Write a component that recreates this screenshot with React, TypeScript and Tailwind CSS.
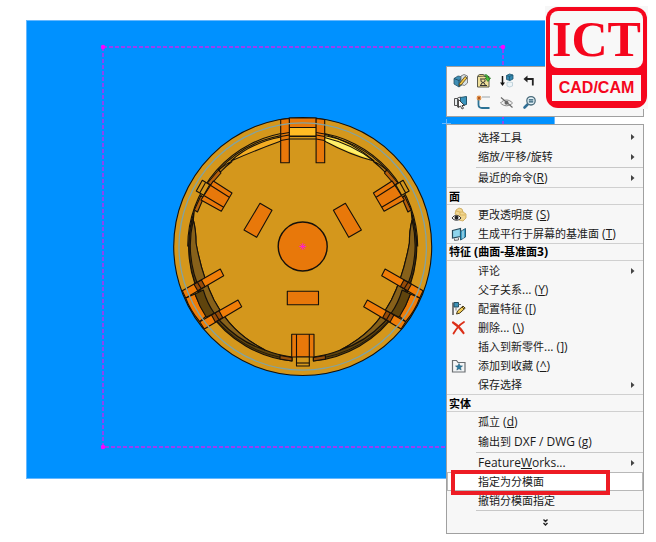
import React from 'react';
import clsx from 'clsx';

const Svg = ({ children }: { children: React.ReactNode }) => (
  <svg viewBox="0 0 16 16" className="size-4 shrink-0" fill="none" aria-hidden="true">
    {children}
  </svg>
);

const EditPartIcon = () => (
  <Svg>
    <path d="M1 5.500l4-2.500 5 1v7l-4 3-5-3z" fill="#3f8fb5" stroke="#2a5468" strokeWidth=".8" />
    <path d="M1 5.500l5 2v6.500M6 7.500l4-3.500" stroke="#1d4256" strokeWidth=".8" />
    <path d="M8 3l3-1.500 3.500 1.500v7l-3 2.500-3.500-1z" fill="#d9e3e8" stroke="#666" strokeWidth=".8" />
    <path d="M6.500 10.500l5.500-7 2 1.500-5.500 6.500-2.500 1z" fill="#f3c94b" stroke="#4d3a10" strokeWidth=".8" />
  </Svg>
);

const EditSketchIcon = () => (
  <Svg>
    <path d="M1.500 3.500h11.500v10.500h-11.500z" fill="#efdf9a" stroke="#5b594a" />
    <path d="M1.500 3l2-1.500h4l1 2" fill="#d8c779" stroke="#5b594a" />
    <path d="M4 6h5M4 12.500h7M5 6.500v2l2 1-2 1.500v1.500M9 6.500v2l-2 1 2 1.500v1.500" stroke="#333" />
    <path d="M8.500 2c2-1 3.500 0 4 3h2L12 8.500 9 5h1.500C10.500 4 10 3 8.500 2z" fill="#48bf3c" stroke="#1d6c1a" strokeWidth=".7" />
  </Svg>
);

const SuppressIcon = () => (
  <Svg>
    <path d="M3.500 3v8" stroke="#111" strokeWidth="1.500" />
    <path d="M1 9.500h5L3.500 13z" fill="#111" />
    <path d="M7.500 2.500l3-1.500 3.500 1v4L11 7.500 7.500 6.500z" fill="#3489b0" stroke="#1d5570" strokeWidth=".8" />
    <path d="M7.500 2.500l3 1L14 2M10.500 3.500v4" stroke="#1d5570" strokeWidth=".7" />
    <path d="M8 9.500l2.500-.500 3 .500v3.500l-3 1-2.500-1z" fill="#eef5f8" stroke="#b5cbd5" strokeWidth=".8" />
  </Svg>
);

const RollbackIcon = () => (
  <Svg>
    <path d="M4 6h6.800v6.500" stroke="#222" strokeWidth="1.800" />
    <path d="M5.500 2.500v7L1.500 6z" fill="#222" />
  </Svg>
);

const SelectOtherIcon = () => (
  <Svg>
    <path d="M1.500 3.500h5v7h-5z" fill="#e9edef" stroke="#555" />
    <path d="M4.500 3l3-1v9l-3 1z" fill="#e9edef" stroke="#555" />
    <path d="M7.500 2.500l6-1v8l-6 1z" fill="#3b94bd" stroke="#24586f" />
    <path d="M5.500 4.500v8l2-1.500 1.500 3 1.500-.700L9 10.500h2.500z" fill="#fff" stroke="#222" strokeWidth=".8" />
  </Svg>
);

const SketchIcon = () => (
  <Svg>
    <path d="M2.500 4v5.500c0 2.500 1.500 3.500 3.500 3.500h7.500" stroke="#2c7396" strokeWidth="1.800" />
    <path d="M6 2h8" stroke="#9aa4a9" />
    <path d="M3 .500v5M.5 3h5M1.200 1.200l3.600 3.600M4.800 1.200l-3.600 3.600" stroke="#e0893a" strokeWidth="1.200" />
    <circle cx="3" cy="3" r="1.300" fill="#b5571a" />
  </Svg>
);

const HideIcon = () => (
  <Svg>
    <path d="M1.500 8c3.300-4 8.700-4 12 0-3.300 3.700-8.700 3.700-12 0z" fill="#eee" stroke="#888" />
    <circle cx="7.500" cy="7.800" r="2" fill="#666" />
    <path d="M2 2.500l11.500 10" stroke="#666" strokeWidth="1.100" />
  </Svg>
);

const ZoomSelectionIcon = () => (
  <Svg>
    <path d="M6 9l-3.500 3.500" stroke="#316f96" strokeWidth="2.600" strokeLinecap="round" />
    <circle cx="9" cy="5.800" r="4.200" fill="#e5f2f7" stroke="#4a6b7b" strokeWidth="1.300" />
    <path d="M6.800 4.800h4.500M6.800 6.800h4.500" stroke="#245670" strokeWidth="1.300" />
  </Svg>
);

const NormalToIcon = () => (
  <Svg>
    <path d="M0 5l4-2v5l-4-1z" fill="#2f86ad" />
  </Svg>
);

const TransparencyIcon = () => (
  <Svg>
    <path d="M5 3l3-2 3 1 1 3 3 2v4l-3 3-4-1-1-4-3-2z" fill="#f1d690" stroke="#c9a552" strokeWidth=".8" />
    <path d="M5 4l4 1 3 0M9 5v3l5 0" stroke="#d0a94f" strokeWidth=".7" />
    <path d="M1 11c2.500-3.500 6.500-3.500 9 0-2.500 3-6.500 3-9 0z" fill="#fff" stroke="#333" />
    <circle cx="5.500" cy="10.800" r="2" fill="#222" />
  </Svg>
);

const ScreenPlaneIcon = () => (
  <Svg>
    <path d="M1.500 4.500l8-2v8l-8 1.500z" fill="#8ed5ed" stroke="#26495a" strokeWidth="1.200" />
    <path d="M3.500 12.500v2l4-.500v-2" fill="#d5dcdf" stroke="#555" strokeWidth=".8" />
    <path d="M9.500 5.500l5-3v8.500l-5 3z" fill="#3d9fc6" stroke="#235b75" />
    <path d="M12 4.500v8" stroke="#d8f0f8" />
  </Svg>
);

const ConfigureIcon = () => (
  <Svg>
    <path d="M2 1.500V14" stroke="#555" strokeWidth="1.500" />
    <path d="M3 1.500h4.500v4.500H3z" fill="#3f92b7" stroke="#234f63" />
    <path d="M7.500 3.500H10M5 6.500v3" stroke="#777" />
    <path d="M5.500 13l1-3 5.500-5 2.200 2.200-5.500 5z" fill="#f2cb54" stroke="#493b1a" />
    <path d="M11 6l2 2" stroke="#493b1a" />
  </Svg>
);

const DeleteIcon = () => (
  <Svg>
    <path d="M2 2.500c4 2.500 8 6.500 10.500 10.500" stroke="#dc2f18" strokeWidth="2.200" strokeLinecap="round" />
    <path d="M13 2C9 4.500 5 9 2.500 13.500" stroke="#dc2f18" strokeWidth="1.800" strokeLinecap="round" />
  </Svg>
);

const FavoriteIcon = () => (
  <Svg>
    <path d="M1.500 2.500h4l1.500 2h7v9.500h-12.500z" fill="#f3f5f6" stroke="#6b6f72" strokeWidth="1.200" />
    <path d="M8 5.500l1 2.300 2.500.200-2 1.600.700 2.500-2.200-1.400-2.200 1.400.700-2.500-2-1.600 2.500-.200z" fill="#2a7ba2" stroke="#1d5069" strokeWidth=".5" />
  </Svg>
);

type Item = {
  label: string;
  hotkey?: string;
  tail?: string;
  icon?: React.ReactNode;
  submenu?: boolean;
  selected?: boolean;
  tall?: boolean;
  divider?: boolean;
};

const sections: { title?: string; items: Item[] }[] = [
  {
    items: [
      { label: '选择工具', submenu: true, tall: true },
      { label: '缩放/平移/旋转', submenu: true, tall: true, divider: true },
      { label: '最近的命令(', hotkey: 'R', tail: ')', submenu: true },
    ],
  },
  {
    title: '面',
    items: [
      { label: '更改透明度 (', hotkey: 'S', tail: ')', icon: <TransparencyIcon/> },
      { label: '生成平行于屏幕的基准面 (', hotkey: 'T', tail: ')', icon: <ScreenPlaneIcon/> },
    ],
  },
  {
    title: '特征 (曲面-基准面3)',
    items: [
      { label: '评论', submenu: true },
      { label: '父子关系... (', hotkey: 'Y', tail: ')' },
      { label: '配置特征 (', hotkey: '[', tail: ')', icon: <ConfigureIcon/> },
      { label: '删除... (', hotkey: '\\', tail: ')', icon: <DeleteIcon/> },
      { label: '插入到新零件... (', hotkey: ']', tail: ')' },
      { label: '添加到收藏 (', hotkey: '^', tail: ')', icon: <FavoriteIcon/> },
      { label: '保存选择', submenu: true },
    ],
  },
  {
    title: '实体',
    items: [
      { label: '孤立 (', hotkey: 'd', tail: ')', tall: true },
      { label: '输出到 DXF / DWG (', hotkey: 'g', tail: ')', tall: true, divider: true },
      { label: 'Feature', hotkey: 'W', tail: 'orks...', submenu: true },
      { label: '指定为分模面', selected: true },
      { label: '撤销分模面指定', divider: true },
    ],
  },
];

const tools = [
  { name: '编辑特征', icon: <EditPartIcon/> },
  { name: '编辑草图', icon: <EditSketchIcon/> },
  { name: '压缩', icon: <SuppressIcon/> },
  { name: '退回', icon: <RollbackIcon/> },
  { name: '正视于', icon: <NormalToIcon/> },
  { name: '选择其他', icon: <SelectOtherIcon/> },
  { name: '草图绘制', icon: <SketchIcon/> },
  { name: '隐藏', icon: <HideIcon/> },
  { name: '放大所选范围', icon: <ZoomSelectionIcon/> },
];

// Latin runs are set one size up so they balance the Chinese glyphs
const MixedText = ({ text }: { text: string }) => (
  <>
    {text.split(/([\x20-\x7e]+)/).map((run, i) => (
      i % 2 ? <span key={i} className="text-xs leading-none">{run}</span> : run
    ))}
  </>
);

const MenuItem = ({ item }: { item: Item }) => (
  <li className="relative">
    <button
      type="button"
      className={clsx(
        'flex w-full items-center text-left whitespace-pre',
        item.tall ? 'h-5' : 'h-[19px]',
        item.selected && 'border border-[#b8b8b8] bg-white'
      )}
    >
      <span className={clsx('flex shrink-0 pl-1', item.selected ? 'w-[30px]' : 'w-[31px]')}>{item.icon}</span>
      <span className="flex-1">
        <MixedText text={item.label}/>
        {item.hotkey && <u className="text-xs leading-none underline-offset-1">{item.hotkey}</u>}
        {item.tail && <MixedText text={item.tail}/>}
      </span>
      {item.submenu && (
        <svg viewBox="0 0 4 6" className="mr-2 h-[6px] w-1" aria-hidden="true">
          <path d="M0 0l3.500 3L0 6z" fill="#444"/>
        </svg>
      )}
    </button>
    {item.divider && <div className="ml-[29px] h-px bg-[#c8c8c8]"/>}
    {/* Callout around the highlighted command */}
    {item.selected && (
      <div className="pointer-events-none absolute -top-0.5 right-[33px] -bottom-1 left-1 z-10 border-4 border-[#ed1c24]"/>
    )}
  </li>
);

const ContextMenu = () => (
  <nav className="border border-[#a0a0a0] bg-[#f7f7f7] pt-0.5">
    {sections.map((section, i) => (
      <div key={i}>
        {section.title && (
          <h2 className="flex h-[18px] items-center border-y border-[#d0d0d0] pl-0.5 font-bold text-black">
            <span className="whitespace-pre"><MixedText text={section.title}/></span>
          </h2>
        )}
        <ul>
          {section.items.map((item) => <MenuItem key={item.label} item={item}/>)}
        </ul>
      </div>
    ))}
    <button type="button" aria-label="展开" className="flex h-[22px] w-full items-center justify-center">
      <svg viewBox="0 0 5 7" className="h-[7px] w-[5px]" fill="none" stroke="#222" strokeWidth="1.400">
        <path d="M.5 .5l2 2 2-2M.5 4l2 2 2-2"/>
      </svg>
    </button>
  </nav>
);

const ShortcutBar = () => (
  <div className="grid h-[51px] grid-cols-[repeat(8,23px)] content-center gap-y-1.5 overflow-hidden border border-[#a0a0a0] bg-[#f7f7f7] pl-1.5">
    {tools.map((tool, i) => (
      <button
        key={tool.name}
        type="button"
        aria-label={tool.name}
        className={clsx('size-4', i === 5 && 'col-start-1')}
      >
        {tool.icon}
      </button>
    ))}
  </div>
);

const Logo = () => (
  <div className="bg-[#f7f7f7] p-px">
    <div className="flex h-[101px] flex-col overflow-hidden rounded-xl bg-[#f5061d] p-1">
      <div className="flex h-[57px] items-center justify-center rounded-lg bg-[#f8f8f8] pb-0.5 font-['Liberation_Serif',serif] text-[50px] leading-none font-bold text-[#f5061d]">
        ICT
      </div>
      <div className="mx-0.5 mt-[7px] flex h-[26px] items-center justify-center bg-[#f8f8f8] font-['Liberation_Sans',sans-serif] text-base font-bold text-[#f5061d]">
        CAD/CAM
      </div>
    </div>
  </div>
);

// Features that repeat on both sides of the part; x = 302.7 is the symmetry axis
const HalfPart = () => (
  <>
    <path d="M187.700 246.500A115 115 0 0 1 289 132.300" fill="none"/>
    <path d="M218.500 170A113 113 0 0 1 289 134.500" fill="none"/>
    <path d="M218.500 170L220.500 172Q225 167 232 161.500Q227 163 218.500 170z" fill="#b07a18"/>
    <path d="M194.300 211A115 115 0 0 0 292 361L292 357Q277 355 265 350C240 337 226 322 214 300C206 284 200 265 196 243Q196 230 193.300 220Z" fill="#5f440d"/>
    <path d="M193.300 220Q196 230 196 243C200 265 206 284 214 300C226 322 240 337 265 350Q240 342 221 322A111 111 0 0 1 193.300 220z" fill="#87611a"/>
    <path d="M192.500 219A113 113 0 0 0 292 359" fill="none" strokeWidth=".8"/>
    <path d="M218.500 170L207.500 183 210.500 185 221 173zM201 195.500L194.300 210 197.500 212 203.500 198z" fill="#b8610c"/>
    <path d="M280 355.500L292 357.500V361L280 359z" fill="#98500c"/>

    <path d="M213.300 181L232 193 221.300 211.300 201 200z" fill="#e8780a"/>
    <path d="M210 185L229.300 197.300M204.300 195.700L223.700 207.300" fill="none"/>
    <path d="M202.300 180.300L196.300 191 203.700 195.300 209.700 184.700z" fill="#d4971c"/>
    <path d="M205.700 182.300L199.700 193" fill="none"/>

    <path d="M185.700 298L195 294Q199 305 206.300 316L199.700 321.700Q190 310 185.700 298z" fill="#f07d08"/>
    <path d="M195 294L203.300 290Q207 303 214.300 313.300L206.300 317.300Q199 306 195 294z" fill="#5f440d"/>
    <path d="M182.300 290.700L220.300 269 223.700 275.700 185.700 298z" fill="#f07d08"/>
    <path d="M199.700 321.700L238 300 241.700 306.700 204.300 329z" fill="#f07d08"/>
    <path d="M194 284.200L201.500 280 205 286.500 197.700 290.800zM211.500 315L219 310.700 222.700 317.500 215.300 322z" fill="#984b09"/>
    <path d="M197.500 282.500L201.300 288.800M215 313L219 319.800" fill="none"/>

    <path d="M260 203.300L272 210.300 256.700 237.300 244 230z" fill="#e8780a"/>
    <path d="M280.700 119.500L289.300 118.500V162.700H280.700z" fill="#e8780a"/>
    <path d="M280.700 134L289.300 132.500M280.700 136.500L289.300 135M280.700 140.500L289.300 139" fill="none"/>
  </>
);

const PartDrawing = () => (
  <svg viewBox="27 21 527 457" className="block w-full" role="img" aria-label="零件视图">
    <rect x="103" y="47" width="400" height="400" fill="none" stroke="#9a3df2" strokeWidth="1.800" strokeDasharray="4 2"/>
    <g fill="#ff00ff">
      <circle cx="103" cy="47" r="2.200"/>
      <circle cx="503" cy="47" r="2.200"/>
      <circle cx="103" cy="447" r="2.200"/>
    </g>
    <path d="M442 123.500h9M446.500 119v9" stroke="#66b8ff"/>
    <g stroke="#15100a" strokeWidth="1.100" strokeLinejoin="round">
      <circle cx="302.700" cy="246.500" r="129" fill="#d4971c"/>
      {/* lit lip along the top */}
      <path d="M281 137Q250 143 231 161Q256 150 281 141z" fill="#f3ad23"/>
      <path d="M324.500 134Q353 142 374 161Q350 155 324.500 141z" fill="#ffd83a"/>
      <path d="M326 138Q350 144 370 158Q350 153 326 141z" fill="#fff06a" stroke="none"/>
      <path d="M324.500 137.500Q352 144 374 161" fill="none"/>
      <path d="M289.300 118H316.300V127.500H289.300z" fill="#e8780a"/>
      <path d="M289.300 127.500H316.300V136H289.300z" fill="#ffbc24"/>
      <path d="M289.300 136.500H316.300M289.300 139H316.300" fill="none"/>
      <HalfPart/>
      <g transform="matrix(-1 0 0 1 605.400 0)">
        <HalfPart/>
      </g>
      <path d="M291.700 334.300H314V357H291.700z" fill="#e8780a"/>
      <path d="M296.500 334.300V357M309.300 334.300V357" fill="none"/>
      <path d="M296.500 357H309.300V366H296.500z" fill="#d4971c"/>
      <path d="M296.500 363H309.300" fill="none"/>
      <path d="M287.300 291.300H318.500V304.700H287.300z" fill="#e8780a"/>
      <circle cx="302.700" cy="246.500" r="24.500" fill="#e8780a" strokeWidth="1.400"/>
    </g>
    <circle cx="302.700" cy="246.500" r="123.700" fill="none" stroke="#83a3a0" strokeWidth="1.300"/>
    <path d="M302.700 243v7M299.200 246.500h7M300.200 244l5 5M305.200 244l-5 5" stroke="#ff1fd0" strokeWidth=".9"/>
  </svg>
);

const App = () => (
  <main className="relative min-h-screen bg-white pt-5 pr-[101px] pl-[26px] font-['Open_Sans','Noto_Sans_CJK_SC',sans-serif] text-[11px] leading-none text-[#1a1a1a]">
    <section className="border border-[#66b8ff] bg-[#0091ff]">
      <PartDrawing/>
    </section>
    <aside className="absolute top-[66px] right-3 flex w-[198px] flex-col gap-[7px]">
      <ShortcutBar/>
      <ContextMenu/>
    </aside>
    <div className="absolute top-1.5 right-2 w-[103px]">
      <Logo/>
    </div>
  </main>
);

export default App;
